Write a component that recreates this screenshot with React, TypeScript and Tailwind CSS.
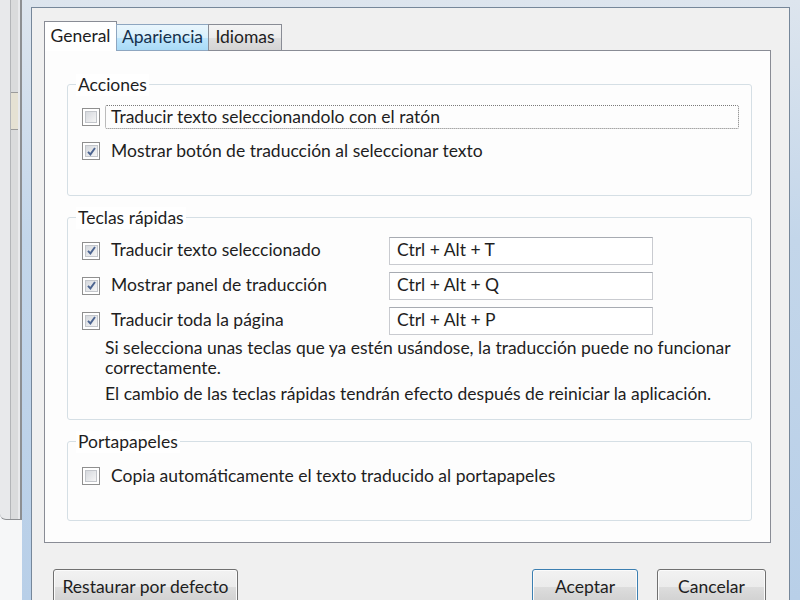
import React from "react";

const font = "font-['Lato','Noto_Sans',sans-serif]";

function Check({ checked }: { checked?: boolean }) {
  return (
    <span className="w-[18px] h-[18px] shrink-0 flex border border-[#8f8f8f] bg-white p-[2px]">
      <span className="flex-1 flex items-center justify-center border border-[#c3c6cb] bg-[linear-gradient(135deg,#d6d9de,#f5f5f5)]">
        {checked && (
          <svg width="11" height="11" viewBox="0 0 11 11">
            <path d="M2 5.8 L4.4 8.4 L9 2" fill="none" stroke="#4c6490" strokeWidth="1.9" />
          </svg>
        )}
      </span>
    </span>
  );
}

function Group({ title, className, children }: { title: string; className: string; children: React.ReactNode }) {
  return (
    <div className={`relative border border-[#d5dfe5] rounded-[3px] ${className}`}>
      <span className="absolute left-[8px] -top-[11px] leading-[22px] bg-white px-[2px]">{title}</span>
      {children}
    </div>
  );
}

function Row({ checked, label, focus }: { checked?: boolean; label: string; focus?: boolean }) {
  return (
    <div className="h-[34px] flex items-center">
      <Check checked={checked} />
      <div
        className={`ml-[5px] flex-1 h-[24px] flex items-center pl-[5px] ${
          focus ? "border border-dotted border-[#7a7a7a] rounded-[2px]" : "border border-transparent"
        }`}
      >
        {label}
      </div>
    </div>
  );
}

function KeyRow({ label, keys }: { label: string; keys: string }) {
  return (
    <div className="h-[35px] flex items-center">
      <Check checked />
      <div className="ml-[5px] w-[284px] pl-[6px]">{label}</div>
      <div className="w-[264px] h-[28px] flex items-center pl-[7px] bg-white border border-[#c9cbd0] border-t-[#a7abb2]">
        {keys}
      </div>
    </div>
  );
}

const btn =
  "h-[36px] rounded-[3px] border flex items-center justify-center bg-[linear-gradient(#f2f2f2_0%,#ebebeb_50%,#dddddd_50%,#cfcfcf_100%)] shadow-[inset_0_0_0_1px_#fbfbfb]";

export default function App() {
  return (
    <div className={`w-[800px] h-[600px] overflow-hidden flex bg-[#f4f5f7] text-[17.5px] text-[#1e1e1e] ${font}`}>
      {/* window behind the dialog */}
      <div className="w-[22px] flex flex-col">
        <div className="h-[520px] flex bg-[#e8e9eb] border-r-2 border-b border-[#8d8f92] rounded-bl-[6px]">
          <div className="w-[10px]" />
          <div className="w-[8px] flex flex-col bg-[#dadbdc] border-l border-[#b3b5b8]">
            <div className="h-[92px]" />
            <div className="h-[38px] bg-[#e5e1d3] border-y border-[#9b9b9b]" />
          </div>
        </div>
        <div className="flex-1 bg-[#f6f7f8]" />
      </div>

      {/* dialog frame */}
      <div className="flex-1 flex flex-col pt-[7px] pl-[9px] pr-[10px] bg-[linear-gradient(#dde5ee,#c3d6ea_40%,#b8cfe8)]">
        <div className="flex-1 flex flex-col bg-[#f0f0f0] border-t border-l border-r border-[#76879a] pt-[13px] pl-[12px] pr-[18px]">
          {/* tabs */}
          <div className="relative z-10 h-[30px] -mb-px flex items-end">
            <div className="w-[73px] h-[30px] bg-white border border-b-0 border-[#898c95] flex items-center justify-center">
              General
            </div>
            <div className="w-[93px] h-[27px] -ml-px border border-[#8ea6c0] flex items-center justify-center text-[#16314d] bg-[linear-gradient(#eaf6fd_0%,#d9f0fc_50%,#bee6fd_50%,#a9daf6_100%)]">
              Apariencia
            </div>
            <div className="w-[74px] h-[27px] -ml-px border border-[#898c95] flex items-center justify-center bg-[linear-gradient(#f4f4f4_0%,#ececec_50%,#e0e0e0_50%,#d4d4d4_100%)]">
              Idiomas
            </div>
          </div>

          {/* tab panel */}
          <div className="h-[493px] bg-[#fdfdfd] border border-[#898c95] pt-[33px] pl-[22px] pr-[18px] flex flex-col">
            <Group title="Acciones" className="h-[112px] pt-[15px] pl-[14px] pr-[12px]">
              <Row label="Traducir texto seleccionandolo con el ratón" focus />
              <Row label="Mostrar botón de traducción al seleccionar texto" checked />
            </Group>

            <Group title="Teclas rápidas" className="mt-[21px] h-[203px] pt-[15px] pl-[14px] pr-[12px]">
              <KeyRow label="Traducir texto seleccionado" keys="Ctrl + Alt + T" />
              <KeyRow label="Mostrar panel de traducción" keys="Ctrl + Alt + Q" />
              <KeyRow label="Traducir toda la página" keys="Ctrl + Alt + P" />
              <div className="pl-[23px] leading-[20px]">
                <p>
                  Si selecciona unas teclas que ya estén usándose, la traducción puede no funcionar
                  <br />
                  correctamente.
                </p>
                <p className="mt-[6px]">El cambio de las teclas rápidas tendrán efecto después de reiniciar la aplicación.</p>
              </div>
            </Group>

            <Group title="Portapapeles" className="mt-[21px] h-[80px] pt-[17px] pl-[14px] pr-[12px]">
              <Row label="Copia automáticamente el texto traducido al portapapeles" />
            </Group>
          </div>

          {/* buttons */}
          <div className="mt-[26px] flex items-start pl-[9px]">
            <div className={`${btn} w-[185px] border-[#707070]`}>Restaurar por defecto</div>
            <div className="flex-1" />
            <div className={`${btn} w-[106px] border-[#3c7fb1] shadow-[inset_0_0_0_1px_#bdeefc]`}>Aceptar</div>
            <div className={`${btn} ml-[19px] mr-[5px] w-[109px] border-[#707070]`}>Cancelar</div>
          </div>
        </div>
      </div>
    </div>
  );
}
